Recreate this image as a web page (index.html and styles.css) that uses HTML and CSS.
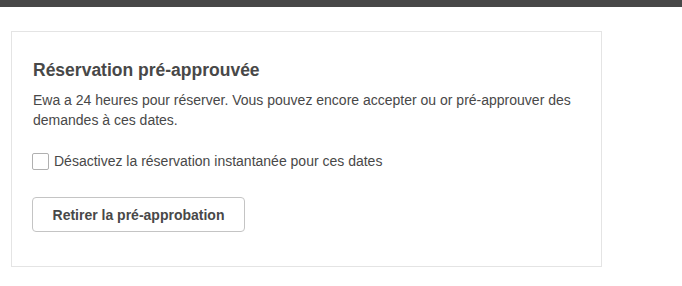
FILE: index.html
```html
<!DOCTYPE html>
<html lang="fr">
<head>
  <meta charset="UTF-8" />
  <meta name="viewport" content="width=device-width, initial-scale=1.0"/>
  <link rel="stylesheet" href="styles.css">
</head>
<body>
  <div class="top-bar"></div>

  <div class="main-area">
    <div class="card">
      <h2 class="card-title">Réservation pré-approuvée</h2>
      <p class="card-text">Ewa a 24 heures pour réserver. Vous pouvez encore accepter ou or pré-approuver des demandes à ces dates.</p>

      <label class="check-row">
        <span class="check-box"></span>
        <span>Désactivez la réservation instantanée pour ces dates</span>
      </label>

      <button class="btn-secondary">Retirer la pré-approbation</button>
    </div>
  </div>
</body>
</html>
```
FILE: styles.css
```css
body {
  font-family: 'Liberation Sans', Arial, sans-serif;
  background-color: #fff;
  margin: 0;
  padding: 0;
  color: #484848;
}

.top-bar {
  height: 7px;
  background-color: #484848;
}

.main-area {
  padding: 24px 11px;
}

.card {
  width: 591px;
  height: 236px;
  box-sizing: border-box;
  border: 1px solid #e4e4e4;
  padding: 27px 20px 0 21px;
}

.card-title {
  font-size: 17.5px;
  font-weight: bold;
  line-height: 22px;
  margin: 0 0 9px 0;
}

.card-text {
  font-size: 14px;
  line-height: 20px;
  margin: 0 0 21px 0;
}

.check-row {
  display: flex;
  align-items: center;
  gap: 5px;
  font-size: 14px;
  line-height: 20px;
  margin-left: -1px;
}

.check-box {
  width: 17px;
  height: 17px;
  box-sizing: border-box;
  border: 1px solid #b0b0b0;
  border-radius: 2px;
  background: #fff;
}

.btn-secondary {
  display: block;
  width: 213px;
  margin-top: 26px;
  margin-left: -1px;
  height: 35px;
  padding: 0;
  font-family: inherit;
  font-size: 14px;
  font-weight: bold;
  color: #484848;
  background: #fff;
  border: 1px solid #c4c4c4;
  border-radius: 4px;
}
```
